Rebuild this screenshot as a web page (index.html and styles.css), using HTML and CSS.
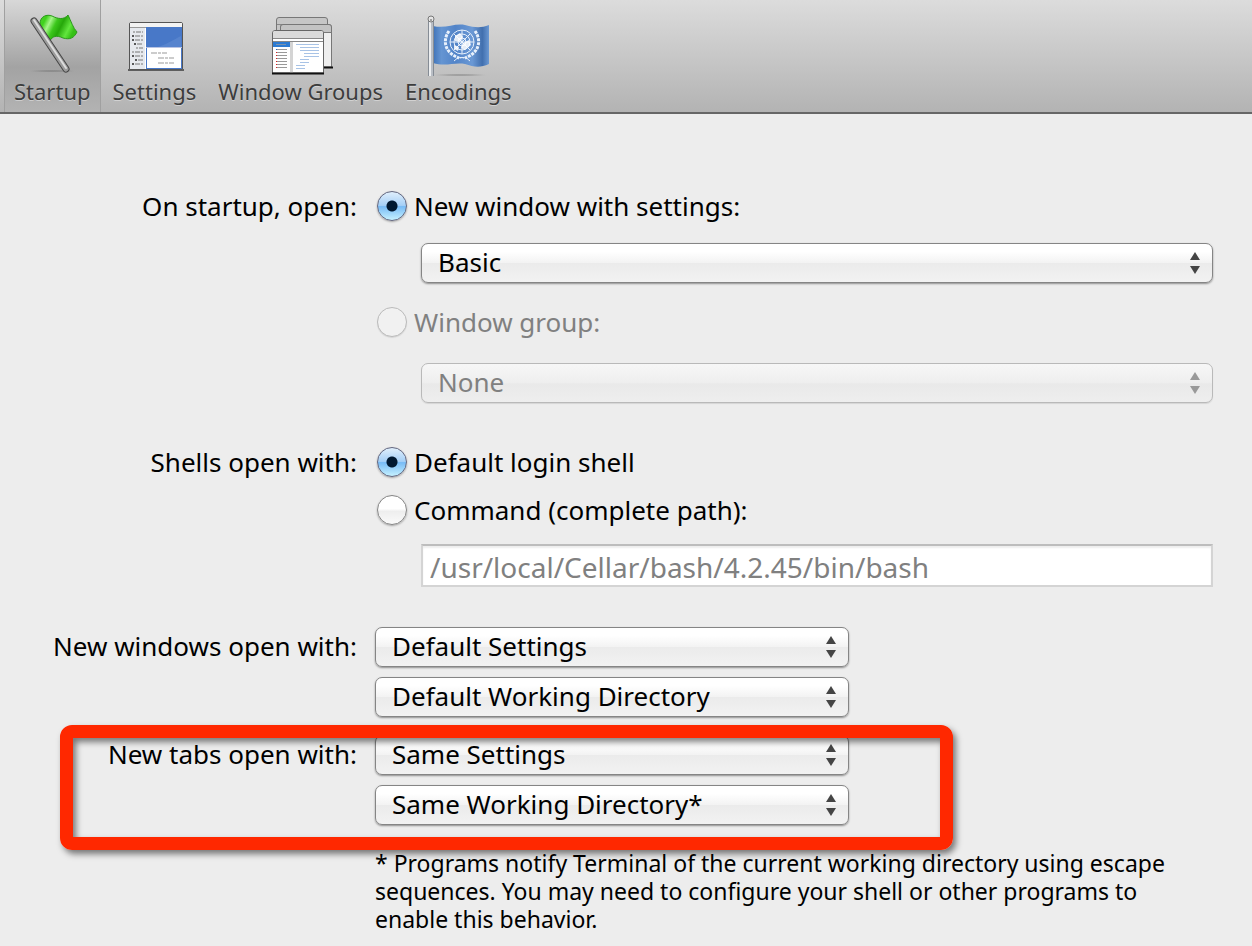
FILE: index.html
```html
<!DOCTYPE html>
<html lang="en">
<head>
<meta charset="utf-8">
<title>Startup</title>
<link rel="stylesheet" href="styles.css">
</head>
<body>
<svg class="defs" width="0" height="0" aria-hidden="true">
  <symbol id="arrows" viewBox="0 0 10 22">
    <path d="M5 0L10 8H0Z M0 14H10L5 22Z" fill="currentColor"/>
  </symbol>
</svg>

<nav class="toolbar" aria-label="Preferences">
  <button class="tool tool-active" type="button">
    <svg class="tool-icon" viewBox="0 0 64 64" aria-hidden="true">
      <defs>
        <linearGradient id="flagGreen" x1="0" y1="0" x2="1" y2=".35">
          <stop offset="0" stop-color="#4fd030"/><stop offset=".18" stop-color="#3fd21c"/><stop offset=".32" stop-color="#a6f58a"/><stop offset=".48" stop-color="#3cc81c"/><stop offset=".64" stop-color="#26a80a"/><stop offset=".85" stop-color="#62e63e"/><stop offset="1" stop-color="#35c015"/>
        </linearGradient>
        <radialGradient id="ground"><stop offset="0" stop-color="#555" stop-opacity=".6"/><stop offset="1" stop-color="#555" stop-opacity="0"/></radialGradient>
      </defs>
      <ellipse cx="32" cy="59" rx="26" ry="1" fill="url(#ground)"/>
      <path d="M20 12C20 4 27 2 32 4C38 7 44 8 48 3C51 9 53 16 57 20C54 26 50 28 43 26C37 23 32 24 30 29C28 24 22 18 20 12Z" fill="url(#flagGreen)" stroke="#2b991b"/>
      <path d="M14 9L46 57" stroke="#444" stroke-width="7" stroke-linecap="round"/>
      <path d="M14 9L46 57" stroke="#9c9c9c" stroke-width="5" stroke-linecap="round"/>
      <path d="M14 8L46 56" stroke="#dcdcdc" stroke-width="2" stroke-linecap="round"/>
    </svg>
    <span>Startup</span>
  </button>
  <button class="tool" type="button">
    <svg class="tool-icon" viewBox="0 0 64 64" aria-hidden="true">
      <path d="M6 58H62" stroke="#333" stroke-width="2" opacity=".7"/>
      <path d="M7.500 57.500V12Q7.500 10.500 9 10.500H59Q60.500 10.500 60.500 12V57.500Z" fill="#fff" stroke="#555"/>
      <rect x="8" y="11" width="52" height="4" fill="#f3f3f3"/>
      <rect x="8" y="15" width="15" height="42" fill="#e6e9ee"/>
      <path d="M8 15.500H60" stroke="#999"/>
      <rect x="24" y="15" width="36" height="42" fill="#4878c8"/>
      <rect x="25" y="36" width="34" height="20" fill="#fff"/>
      <path d="M36 35C43 33 51 28 59 24V35Z" fill="#6d95d7" opacity=".4"/>
      <path d="M24 35.500H60" stroke="#b9c4e4"/>
      <path d="M11 20h10M10 24h11M10 28h11M12 32h9M14 36h7M10 40h11M10 44h11M13 48h8M10 52h11" stroke="#777" stroke-dasharray="2 1 5 1"/>
      <path d="M10 24h2M10 28h2M12 32h2M10 44h2M13 48h2M10 52h2" stroke="#000" stroke-width="1"/>
      <path d="M29 41h16M36 46h16M36 51h16" stroke="#999" stroke-dasharray="6 1 3 1"/>
    </svg>
    <span>Settings</span>
  </button>
  <button class="tool" type="button">
    <svg class="tool-icon" viewBox="0 0 64 64" aria-hidden="true">
      <path d="M7.500 20V8Q7.500 5.500 10 5.500H56Q58.500 5.500 58.500 8V20Z" fill="#c6c6c6" stroke="#777"/>
      <path d="M8 12.500H58" stroke="#888"/>
      <path d="M11.500 55V15Q11.500 12.500 14 12.500H60Q62.500 12.500 62.500 15V55Z" fill="#eee" stroke="#777"/>
      <path d="M11.500 20.500V15Q11.500 12.500 14 12.500H60Q62.500 12.500 62.500 15V20.500Z" fill="#c3c3c3" stroke="#777"/>
      <path d="M50 55.500H64" stroke="#111" stroke-width="2"/>
      <path d="M3.500 61V21Q3.500 18.500 6 18.500H52Q54.500 18.500 54.500 21V61Z" fill="#fff" stroke="#666"/>
      <path d="M4 26V21Q4 19 6 19H52Q54 19 54 21V26Z" fill="#dadada"/>
      <path d="M4 26.500H54M4 29.500H54" stroke="#888"/>
      <rect x="4" y="30" width="17" height="5" fill="#2d7bd2"/>
      <path d="M7 32.500h10" stroke="#7c93ad"/>
      <rect x="21" y="30" width="3" height="31" fill="#d4d4d4"/>
      <path d="M8 37.500h10M8 40.500h10M8 43.500h10M8 46.500h10M8 49.500h10M8 52.500h10M8 55.500h10" stroke="#999"/>
      <path d="M7 40.500h1M7 43.500h1M7 46.500h1M7 49.500h1M7 52.500h1M7 55.500h1" stroke="#d22"/>
      <path d="M7 37.500h1" stroke="#26c"/>
      <path d="M27 32.500h23M31 35.500h19M31 38.500h19M35 41.500h15M35 44.500h15M31 47.500h9M31 50.500h9M27 53.500h9M27 56.500h9" stroke="#a8c3e6"/>
      <path d="M3 61.500H55" stroke="#111" stroke-width="2"/>
    </svg>
    <span>Window Groups</span>
  </button>
  <button class="tool" type="button">
    <svg class="tool-icon" viewBox="0 0 64 64" aria-hidden="true">
      <defs>
        <linearGradient id="flagBlue"><stop offset="0" stop-color="#3f73b8"/><stop offset=".15" stop-color="#6595d2"/><stop offset=".4" stop-color="#5284c8"/><stop offset=".7" stop-color="#6b99d5"/><stop offset=".88" stop-color="#416fae"/><stop offset="1" stop-color="#6a98d3"/></linearGradient>
      </defs>
      <ellipse cx="34" cy="63" rx="30" ry="1" fill="url(#ground)"/>
      <path d="M7 14C20 17 28 11 39 13C50 16 55 16 63 13V52C54 56 48 55 39 52C28 50 20 55 7 51Z" fill="url(#flagBlue)"/>
      <g fill="none" stroke="#e8f1fc">
        <circle cx="36" cy="30" r="12"/><circle cx="36" cy="30" r="8"/><circle cx="36" cy="30" r="4"/>
        <path d="M24 30H48M36 18V42M28 22L44 38M44 22L28 38"/>
        <path d="M23 19C16 29 19 41 33 46M49 19C56 29 53 41 39 46" stroke-width="3" stroke-dasharray="3 1"/>
        <path d="M28 49Q33 44 38 46M44 49Q39 44 34 46"/>
      </g>
      <path d="M29 24l5-3 3 4-3 5-5-1ZM37 31l6-3 2 5-6 5-4-2ZM28 33l5 2-1 4-4-2Z" fill="#fff" opacity=".85"/>
      <path d="M5 8V64" stroke="#858c95" stroke-width="6"/>
      <path d="M5 8V64" stroke="#b9bec5" stroke-width="4"/>
      <path d="M4 8V64" stroke="#eceef0" stroke-width="2"/>
      <circle cx="5" cy="7" r="3" fill="#e6e6e6" stroke="#777"/>
      <circle cx="5" cy="8" r="1" fill="#888"/>
    </svg>
    <span>Encodings</span>
  </button>
</nav>

<form class="panel">
  <div class="row" role="group" aria-labelledby="l-startup">
    <span class="label" id="l-startup">On startup, open:</span>
    <div class="controls">
      <label class="choice"><input class="radio" type="radio" name="startup" checked><span>New window with settings:</span></label>
      <div class="select-box indent space-19">
        <select class="select" aria-label="Window settings"><option>Basic</option></select>
        <svg class="arrows" aria-hidden="true"><use href="#arrows"/></svg>
      </div>
      <label class="choice choice-disabled space-21"><input class="radio" type="radio" name="startup" disabled><span>Window group:</span></label>
      <div class="select-box select-box-disabled indent space-23">
        <select class="select" aria-label="Window group" disabled><option>None</option></select>
        <svg class="arrows" aria-hidden="true"><use href="#arrows"/></svg>
      </div>
    </div>
  </div>

  <div class="row row-shells" role="group" aria-labelledby="l-shells">
    <span class="label" id="l-shells">Shells open with:</span>
    <div class="controls">
      <label class="choice"><input class="radio" type="radio" name="shell" checked><span>Default login shell</span></label>
      <label class="choice space-12"><input class="radio" type="radio" name="shell"><span>Command (complete path):</span></label>
      <input class="field indent space-16" type="text" aria-label="Command path" value="/usr/local/Cellar/bash/4.2.45/bin/bash" disabled>
    </div>
  </div>

  <div class="row row-windows">
    <label class="label label-select" for="win-settings">New windows open with:</label>
    <div class="controls controls-short">
      <div class="select-box">
        <select class="select" id="win-settings"><option>Default Settings</option></select>
        <svg class="arrows" aria-hidden="true"><use href="#arrows"/></svg>
      </div>
      <div class="select-box">
        <select class="select" aria-label="New window working directory"><option>Default Working Directory</option></select>
        <svg class="arrows" aria-hidden="true"><use href="#arrows"/></svg>
      </div>
    </div>
  </div>

  <div class="row row-tabs">
    <label class="label label-select" for="tab-settings">New tabs open with:</label>
    <div class="controls controls-short">
      <div class="select-box">
        <select class="select" id="tab-settings"><option>Same Settings</option></select>
        <svg class="arrows" aria-hidden="true"><use href="#arrows"/></svg>
      </div>
      <div class="select-box">
        <select class="select" aria-label="New tab working directory"><option>Same Working Directory*</option></select>
        <svg class="arrows" aria-hidden="true"><use href="#arrows"/></svg>
      </div>
    </div>
    <div class="highlight"></div>
  </div>

  <div class="row row-note">
    <p class="note">* Programs notify Terminal of the current working directory using escape sequences. You may need to configure your shell or other programs to enable this behavior.</p>
  </div>
</form>
</body>
</html>
```
FILE: styles.css
```css
* { box-sizing: border-box; }

body {
  margin: 0;
  background: #ededed;
  color: #000;
  font-family: "Noto Sans", "Open Sans", sans-serif;
  font-size: 26px;
  line-height: 36px;
}

.defs { position: absolute; }

.toolbar {
  display: flex;
  gap: 2px;
  padding: 0 4px;
  border-bottom: 2px solid #666;
  background: linear-gradient(#dcdcdc, #b3b3b3);
}

.tool {
  display: flex;
  flex-direction: column;
  align-items: center;
  height: 112px;
  padding: 12px 10px 0;
  border: 0;
  background: none;
  color: #3c3c3c;
  font: inherit;
  font-size: 22px;
  line-height: 30px;
  text-shadow: 0 1px 0 rgba(255, 255, 255, 0.4);
}

.tool-active {
  background: linear-gradient(#d8d8d8, #a3a3a3 60%, #b3b3b3);
  box-shadow: inset 1px 0 #a0a0a0, inset -1px 0 #a0a0a0;
}

.tool-icon { width: 64px; height: 64px; fill: none; }

.panel { padding: 74px 39px 0 0; }

.row {
  display: grid;
  grid-template-columns: 357px 1fr;
  column-gap: 18px;
  position: relative;
}

.row-shells { margin-top: 41px; }
.row-windows { margin-top: 40px; }
.row-tabs { margin-top: 18px; }
.row-note { margin-top: 24px; }

.label { text-align: right; }
.label-select { line-height: 38px; }

.controls { display: flex; flex-direction: column; }
.controls-short { gap: 10px; width: 474px; }

.indent { margin-left: 46px; }
.space-12 { margin-top: 12px; }
.space-16 { margin-top: 16px; }
.space-19 { margin-top: 19px; }
.space-21 { margin-top: 21px; }
.space-23 { margin-top: 23px; }

.choice { display: flex; align-items: center; gap: 7px; }
.choice-disabled { color: #808080; }

.radio {
  appearance: none;
  width: 30px;
  height: 30px;
  margin: 0 0 0 2px;
  border: 1px solid #858585;
  border-radius: 50%;
  background: linear-gradient(#fff 45%, #eee 55%, #fafafa);
  box-shadow: 0 1px 2px rgba(0, 0, 0, 0.3);
}

.radio:checked {
  border-color: #62667f;
  background:
    radial-gradient(circle, #001830 5px, transparent 6px),
    linear-gradient(#e0effc, #a5cff6 48%, #78bbf5 52%, #c5f1ff);
}

.radio:disabled { border-color: #bbb; background: #f1f1f1; box-shadow: 0 1px 1px rgba(0, 0, 0, 0.1); }

.select-box { position: relative; color: #444; }
.select-box-disabled { color: #999; }

.select {
  appearance: none;
  display: block;
  width: 100%;
  height: 40px;
  padding: 0 40px 2px 16px;
  border: 1px solid #858585;
  border-radius: 7px;
  background: linear-gradient(#fff 20%, #f3f3f3 49%, #ebebeb 51%, #f2f2f2);
  box-shadow: 0 1px 2px rgba(0, 0, 0, 0.4);
  color: #000;
  font: inherit;
}

.select:disabled {
  border-color: #b9b9b9;
  background: linear-gradient(#f7f7f7, #eee 50%, #e9e9e9 52%, #eee);
  box-shadow: 0 1px 1px rgba(0, 0, 0, 0.1);
  color: #808080;
  opacity: 1;
}

.arrows {
  position: absolute;
  top: 9px;
  right: 13px;
  width: 10px;
  height: 22px;
  pointer-events: none;
}

.field {
  height: 43px;
  padding: 2px 7px 0;
  border: 2px solid #d4d4d4;
  border-top-color: #bdbdbd;
  background: #fff;
  box-shadow: inset 0 2px 2px rgba(0, 0, 0, 0.07);
  color: #808080;
  font: inherit;
  font-size: 28px;
}

.highlight {
  position: absolute;
  top: -10px;
  left: 60px;
  width: 893px;
  height: 125px;
  border: 13px solid #ff2800;
  border-radius: 12px;
  box-shadow: 3px 4px 6px rgba(0, 0, 0, 0.5), inset 3px 4px 6px rgba(0, 0, 0, 0.5);
  pointer-events: none;
}

.note {
  grid-column: 2;
  max-width: 800px;
  margin: 0;
  font-size: 23px;
  line-height: 28px;
}
```
